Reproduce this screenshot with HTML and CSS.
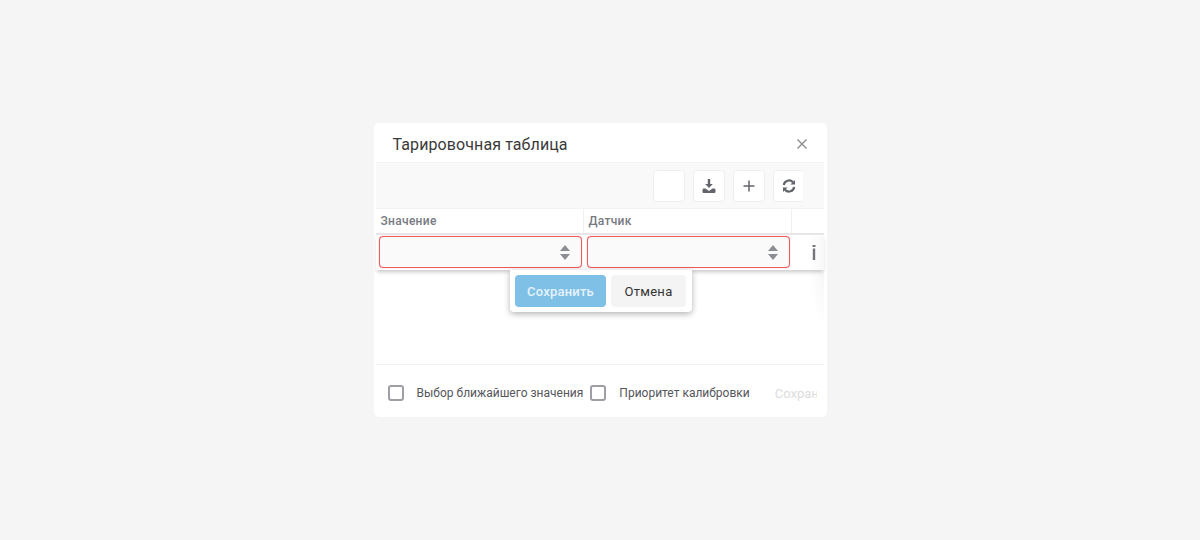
FILE: index.html
```html
<!DOCTYPE html>
<html lang="ru">
<head>
  <meta charset="UTF-8" />
  <title>Тарировочная таблица</title>
  <link rel="stylesheet" href="styles.css">
</head>
<body>
  <div class="dialog">
    <div class="dialog-header">
      <span class="dialog-title">Тарировочная таблица</span>
      <svg class="close-icon" width="12" height="12" viewBox="0 0 12 12"><path d="M1.500 1.500l9 9M10.500 1.500l-9 9" stroke="#8a8a90" stroke-width="1.400" fill="none"/></svg>
    </div>

    <div class="toolbar">
      <div class="toolbar-inner">
        <button class="tool-btn"></button>
        <button class="tool-btn">
          <svg width="16" height="16" viewBox="0 0 16 16"><path d="M6.800 1h2.400v5h2.600L8 10 4.200 6h2.600z" fill="#62646c"/><path d="M1.500 12c0-1 .6-1.500 1.500-1.500h1.500L8 13l3.500-2.500H13c.9 0 1.500.5 1.500 1.500v1.500c0 1-.6 1.500-1.500 1.500H3c-.9 0-1.500-.5-1.500-1.500z" fill="#62646c"/></svg>
        </button>
        <button class="tool-btn">
          <svg width="14" height="14" viewBox="0 0 14 14"><path d="M7 1.500v11M1.500 7h11" stroke="#62646c" stroke-width="1.500" fill="none"/></svg>
        </button>
        <button class="tool-btn">
          <svg width="14" height="14" viewBox="0 0 14 14"><path d="M1.800 6A5.300 5.300 0 0 1 11 3.300" stroke="#62646c" stroke-width="2.200" fill="none"/><path d="M13 1v4.600H8.400z" fill="#62646c"/><path d="M12.200 8A5.300 5.300 0 0 1 3 10.700" stroke="#62646c" stroke-width="2.200" fill="none"/><path d="M1 13V8.400h4.600z" fill="#62646c"/></svg>
        </button>
      </div>
    </div>

    <div class="table-head">
      <div class="head-cell">Значение</div>
      <div class="head-cell">Датчик</div>
      <div class="head-cell last"></div>
    </div>

    <div class="table-body">
      <div class="edit-row">
        <div class="num-input"><span class="spin"><i class="up"></i><i class="down"></i></span></div>
        <div class="num-input"><span class="spin"><i class="up"></i><i class="down"></i></span></div>
        <div class="row-action">
          <svg width="4" height="15" viewBox="0 0 4 15"><path d="M0.500 0h3v2h-3z" fill="#74767c"/><path d="M0.800 3.500h2.400V15H0.800z" fill="#74767c"/></svg>
        </div>
      </div>
      <div class="row-popup">
        <button class="btn-save">Сохранить</button>
        <button class="btn-cancel">Отмена</button>
      </div>
    </div>

    <div class="dialog-footer">
      <label class="check"><span class="box"></span><span class="check-text">Выбор ближайшего значения</span></label>
      <label class="check second"><span class="box"></span><span class="check-text">Приоритет калибровки</span></label>
      <div class="footer-save"><span>Сохранить</span></div>
    </div>
  </div>
</body>
</html>
```

FILE: styles.css
```css
/* Page */
body {
  margin: 0;
  height: 540px;
  background-color: #f5f5f5;
  font-family: "Roboto", "Liberation Sans", sans-serif;
  display: flex;
  justify-content: center;
  align-items: flex-start;
  overflow: hidden;
}
button {
  font-family: inherit;
}
/* Dialog */
.dialog {
  width: 453px;
  height: 294px;
  margin-top: 123px;
  padding: 0 3px 0 2px;
  box-sizing: border-box;
  background-color: #fff;
  border-radius: 5px;
  display: flex;
  flex-direction: column;
  overflow: hidden;
}
.dialog-header {
  height: 39px;
  flex: none;
  padding: 0 16px 0 17px;
  display: flex;
  align-items: center;
  justify-content: space-between;
  border-bottom: 1px solid #f3f3f3;
}
.dialog-title {
  font-size: 16px;
  color: #3a3a3a;
  letter-spacing: 0.1px;
  margin-top: 4px;
}
.close-icon {
  margin-top: 3px;
}
/* Toolbar with grey background */
.toolbar {
  height: 45px;
  flex: none;
  background-color: #f9f9f9;
  border-bottom: 1px solid #f3f3f3;
  display: flex;
  justify-content: flex-end;
  padding-right: 21px;
}
.toolbar-inner {
  width: 150px;
  padding-top: 7px;
  display: flex;
  gap: 8px;
  overflow: hidden;
}
.tool-btn {
  width: 32px;
  height: 32px;
  flex: none;
  padding: 0;
  background-color: #fff;
  border: 1px solid #eee;
  border-radius: 4px;
  display: flex;
  align-items: center;
  justify-content: center;
}
/* Table header */
.table-head {
  height: 24px;
  flex: none;
  display: flex;
  border-bottom: 2px solid #e6e6e6;
}
.head-cell {
  width: 208px;
  padding-left: 5px;
  box-sizing: border-box;
  font-size: 12px;
  font-weight: 500;
  line-height: 24px;
  letter-spacing: 0.3px;
  color: #777a82;
  border-right: 1px solid #f0f0f0;
}
.head-cell.last {
  flex: 1;
  border-right: none;
}
/* Edit row + popup */
.table-body {
  flex: 1;
  position: relative;
  background: radial-gradient(ellipse 14px 60px at right 35px, rgba(0,0,0,0.035), transparent);
}
.edit-row {
  height: 35px;
  display: flex;
  gap: 5px;
  padding: 1px 0 0 3px;
  box-sizing: border-box;
  background-color: #fff;
  box-shadow: 0 3px 4px -1px rgba(0,0,0,0.22);
}
.num-input {
  width: 203px;
  height: 32px;
  box-sizing: border-box;
  border: 1px solid #ee5a5a;
  box-shadow: 0 0 1px #f08080;
  border-radius: 4px;
  background-color: #fafafa;
  display: flex;
  align-items: center;
  justify-content: flex-end;
  padding-right: 11px;
}
.spin {
  display: flex;
  flex-direction: column;
  gap: 3px;
}
.spin i {
  display: block;
  width: 0;
  height: 0;
  border-left: 5.500px solid transparent;
  border-right: 5.500px solid transparent;
}
.spin .up {
  border-bottom: 6px solid #8c8e94;
}
.spin .down {
  border-top: 6px solid #8c8e94;
}
.row-action {
  flex: 1;
  display: flex;
  justify-content: flex-start;
  padding: 9px 0 0 17px;
  background: linear-gradient(to left, #f7f7f7, #fff 14px);
}
.row-popup {
  position: absolute;
  top: 35px;
  left: 134.500px;
  width: 182px;
  height: 42px;
  box-sizing: border-box;
  padding: 5px;
  display: flex;
  gap: 5px;
  background-color: #fff;
  border-radius: 0 0 4px 4px;
  box-shadow: 0 2px 6px rgba(0,0,0,0.3);
}
.btn-save {
  width: 91px;
  height: 32px;
  border: none;
  border-radius: 4px;
  padding: 0;
  background-color: #7fc0e6;
  color: #e6f3fb;
  font-size: 13px;
  font-weight: 500;
  letter-spacing: 0.2px;
}
.btn-cancel {
  width: 75px;
  height: 32px;
  border: none;
  border-radius: 4px;
  padding: 0;
  background-color: #f4f4f4;
  color: #333;
  font-size: 13px;
  letter-spacing: 0.3px;
}
/* Footer */
.dialog-footer {
  height: 53px;
  flex: none;
  box-sizing: border-box;
  border-top: 1px solid #f3f3f3;
  padding: 4px 0 0 12px;
  display: flex;
  align-items: center;
  font-size: 12px;
  color: #55565a;
}
.check {
  display: flex;
  align-items: center;
  gap: 13px;
}
.check.second {
  margin-left: 7px;
}
.box {
  width: 16px;
  height: 16px;
  box-sizing: border-box;
  border: 2px solid #9d9ea6;
  border-radius: 3px;
  background-color: #fff;
}
.footer-save {
  width: 42px;
  margin-left: 25px;
  overflow: hidden;
  white-space: nowrap;
  color: #dcdcdc;
  font-size: 13px;
}
```
